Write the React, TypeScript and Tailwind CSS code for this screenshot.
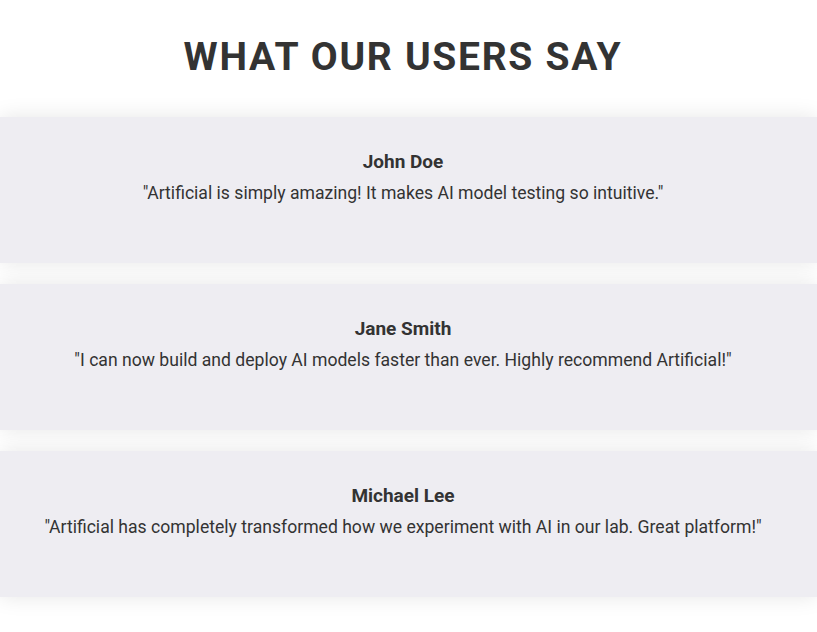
const testimonials = [
  {
    name: "John Doe",
    quote: "\"Artificial is simply amazing! It makes AI model testing so intuitive.\"",
  },
  {
    name: "Jane Smith",
    quote: "\"I can now build and deploy AI models faster than ever. Highly recommend Artificial!\"",
  },
  {
    name: "Michael Lee",
    quote: "\"Artificial has completely transformed how we experiment with AI in our lab. Great platform!\"",
  },
];

export default function App() {
  return (
    <div className="min-h-screen bg-white font-['Roboto',sans-serif] text-[#333]">
      <section className="pt-[35px]">
        <h2 className="pr-[11px] text-center text-[39px] leading-[45px] font-bold tracking-[1.7px]">
          WHAT OUR USERS SAY
        </h2>
        <div className="mt-[37px] flex flex-col gap-[21px]">
          {testimonials.map((t) => (
            <div
              key={t.name}
              className="h-[146px] bg-[#eeedf2] pl-5 pr-[31px] pt-[32px] text-center shadow-[0_0_20px_rgba(0,0,0,0.1)]"
            >
              <h3 className="text-[19px] leading-[26px] font-bold">{t.name}</h3>
              <p className="mt-[5px] text-[17.6px] leading-[26px] text-[#333]">{t.quote}</p>
            </div>
          ))}
        </div>
      </section>
    </div>
  );
}
